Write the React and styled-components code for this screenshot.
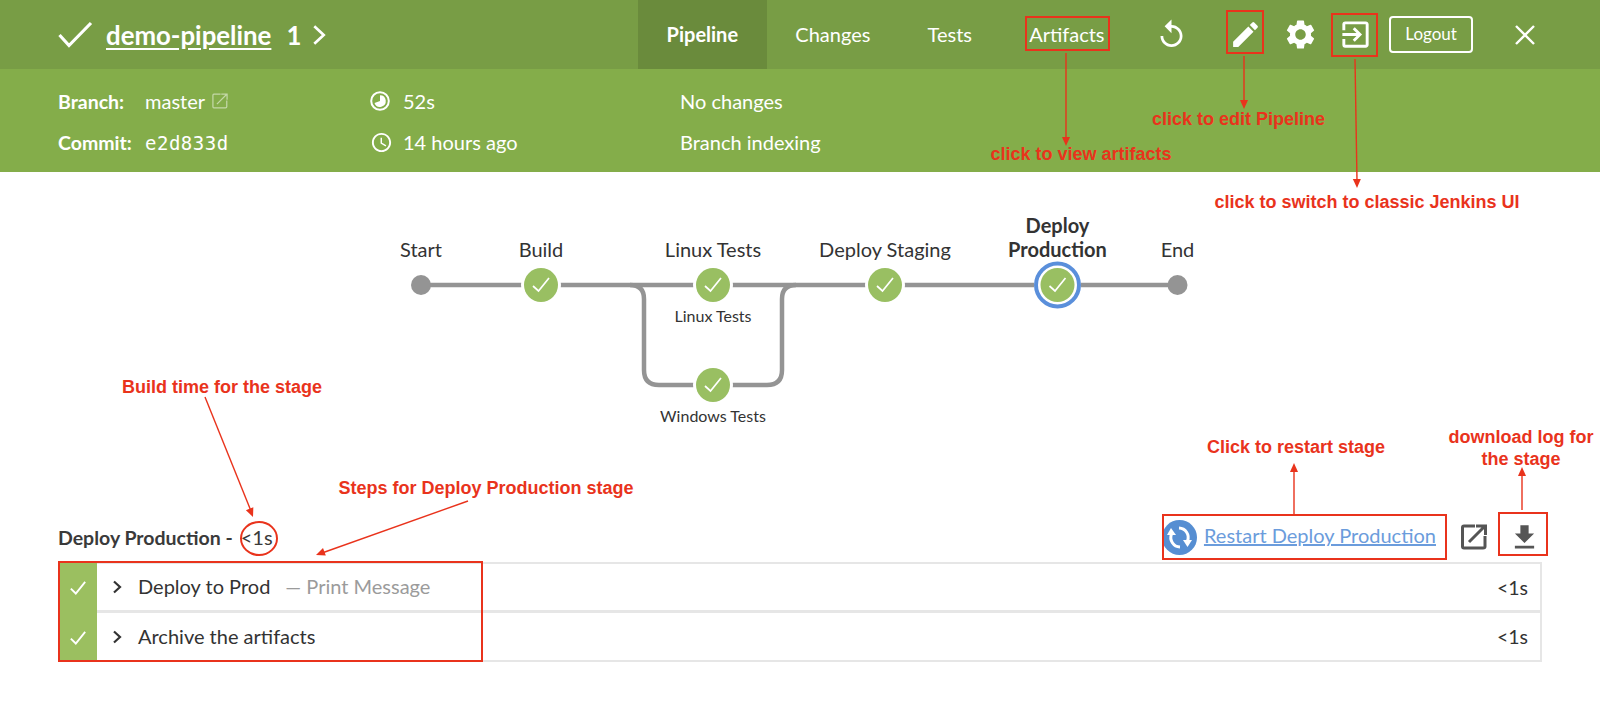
import React from 'react';
import styled, { createGlobalStyle } from 'styled-components';
import { MdEdit, MdSettings, MdExitToApp, MdFileDownload, MdReplay, MdAccessTime } from 'react-icons/md';

const GlobalStyle = createGlobalStyle`
  html, body {
    margin: 0;
    padding: 0;
    background: #fff;
  }
  body {
    font-family: Lato, "Open Sans", sans-serif;
    color: #333;
    overflow: hidden;
  }
`;

const RED = '#e9331c';

const Page = styled.div`
  position: relative;
  width: 1600px;
  height: 705px;
  overflow: hidden;
`;

/* ---------- result header ---------- */

const TopBar = styled.div`
  display: flex;
  align-items: stretch;
  height: 69px;
  padding-left: 58px;
  background: #789d45;
  color: #fff;
`;

const Brand = styled.div`
  display: flex;
  align-items: center;
  width: 580px;
  font-size: 25.8px;
  font-weight: 700;
`;

const PipelineName = styled.a`
  margin-left: 13px;
  color: #fff;
  text-decoration: underline;
  text-underline-offset: 3px;
`;

const RunNumber = styled.span`
  margin-left: 15px;
`;

const RunChevron = styled.span`
  display: flex;
  margin-left: 7px;
`;

const Tabs = styled.nav`
  display: flex;
`;

const Tab = styled.a`
  display: flex;
  align-items: center;
  padding: 0 28.6px 2px;
  font-size: 20px;
  font-weight: ${(p) => (p.$active ? 700 : 400)};
  background: ${(p) => (p.$active ? '#6a8b3c' : 'transparent')};
`;

const Actions = styled.div`
  display: flex;
  align-items: center;
  margin-left: 11px;
`;

const IconButton = styled.span`
  display: flex;
  align-items: center;
  justify-content: center;
  width: ${(p) => p.$width || 55}px;
  margin-right: ${(p) => p.$after || 0}px;
`;

const LogoutButton = styled.span`
  display: flex;
  align-items: center;
  justify-content: center;
  box-sizing: border-box;
  width: 84px;
  height: 37px;
  margin-left: 6px;
  padding-bottom: 2px;
  border: 2px solid #fff;
  border-radius: 4px;
  font-size: 17px;
`;

const CloseButton = styled.span`
  display: flex;
  margin-left: 41px;
`;

const InfoBar = styled.div`
  display: grid;
  grid-template-columns: 312px 310px 1fr;
  grid-template-rows: 41px 41px;
  align-content: center;
  align-items: center;
  height: 103px;
  padding: 2px 0 0 58px;
  box-sizing: border-box;
  background: #84ad4a;
  color: #fff;
  font-size: 20px;
`;

const InfoCell = styled.div`
  display: flex;
  align-items: center;
`;

const InfoLabel = styled.span`
  width: 87px;
  font-weight: 700;
  font-size: 19.5px;
`;

const BranchLink = styled.span`
  display: flex;
  margin-left: 7px;
`;

const CommitHash = styled.span`
  font-family: "DejaVu Sans Mono", monospace;
  font-size: 19px;
  letter-spacing: 0.5px;
  margin-top: 1px;
`;

const InfoIcon = styled.span`
  display: flex;
  width: 33px;
`;

/* ---------- pipeline graph ---------- */

const GraphArea = styled.div`
  position: relative;
  height: 340px;
`;

const GraphLines = styled.svg`
  position: absolute;
  left: 0;
  top: 0;
`;

const NodeLabel = styled.div`
  position: absolute;
  left: ${(p) => p.$x}px;
  top: ${(p) => p.$y}px;
  transform: translate(-50%, -50%);
  text-align: center;
  white-space: nowrap;
  line-height: 24px;
  font-size: ${(p) => (p.$small ? 16 : 20)}px;
  font-weight: ${(p) => (p.$selected ? 700 : 400)};
  color: #333;
`;

/* ---------- stage detail ---------- */

const StageHeader = styled.div`
  display: flex;
  align-items: center;
  justify-content: space-between;
  height: 50px;
  padding: 0 50px 0 58px;
`;

const StageTitle = styled.div`
  font-size: 19.5px;
  font-weight: 700;
  color: #3a3a3a;
`;

const StageTime = styled.span`
  margin-left: 8px;
  font-size: 20px;
  font-weight: 400;
`;

const StageActions = styled.div`
  display: flex;
  align-items: center;
`;

const RestartLink = styled.a`
  display: flex;
  align-items: center;
  gap: 7px;
  margin-right: 25px;
  margin-left: 2px;
  color: #6b9cdc;
  font-size: 20px;
`;

const RestartText = styled.span`
  margin-top: -4px;
  text-decoration: underline;
`;

const DownloadIcon = styled.span`
  display: flex;
  margin-left: 21px;
  margin-right: 9px;
  color: #555;
`;

const StepList = styled.div`
  margin: 0 58px;
  width: 1484px;
`;

const StepRow = styled.div`
  display: flex;
  align-items: center;
  box-sizing: border-box;
  height: ${(p) => (p.$first ? 51 : 49)}px;
  border: solid #e6e6e6;
  border-width: ${(p) => (p.$first ? '2px 2px 3px 0' : '0 2px 2px 0')};
  font-size: 20px;
  color: #333;
`;

const StepStatus = styled.span`
  display: flex;
  align-items: center;
  justify-content: center;
  align-self: stretch;
  width: 39px;
  margin-top: ${(p) => (p.$first ? -2 : 0)}px;
  margin-bottom: ${(p) => (p.$first ? -3 : -2)}px;
  background: #9bbf60;
`;

const StepChevron = styled.span`
  display: flex;
  margin-left: 13px;
  width: 28px;
`;

const StepName = styled.span`
  margin-top: -2px;
`;

const StepNote = styled.span`
  margin-left: 15px;
  margin-top: -2px;
  color: #9b9b9b;
`;

const StepTime = styled.span`
  margin-left: auto;
  margin-right: 12px;
  font-size: 19.5px;
`;

/* ---------- red annotations painted over the screenshot ---------- */

const Overlay = styled.div`
  position: absolute;
  inset: 0;
  pointer-events: none;
`;

const ArrowLayer = styled.svg`
  position: absolute;
  left: 0;
  top: 0;
`;

const Note = styled.div`
  position: absolute;
  left: ${(p) => p.$x}px;
  top: ${(p) => p.$y}px;
  transform: translate(-50%, -50%);
  font-family: "Liberation Sans", Arial, sans-serif;
  font-weight: 700;
  font-size: 18px;
  line-height: 22px;
  text-align: center;
  white-space: nowrap;
  color: ${RED};
`;

const RedBox = styled.div`
  position: absolute;
  box-sizing: border-box;
  left: ${(p) => p.$x}px;
  top: ${(p) => p.$y}px;
  width: ${(p) => p.$w}px;
  height: ${(p) => p.$h}px;
  border: 2px solid ${RED};
  border-radius: ${(p) => (p.$round ? '50%' : '0')};
`;

const Check = ({ size = 20, width = 1.6, color = '#fff' }) => (
  <svg width={size} height={size} viewBox="0 0 20 20" fill="none">
    <path d="M3.5 10.5 L8 15 L16.5 4.5" stroke={color} strokeWidth={width} />
  </svg>
);

const BrandCheck = () => (
  <svg width="35" height="28" viewBox="0 0 35 28" fill="none">
    <path d="M1.5 14 L11 24.5 L33 2" stroke="#fff" strokeWidth="3.2" />
  </svg>
);

const Chevron = ({ size = 14, color = '#333', width = 2.2 }) => (
  <svg width={size} height={size} viewBox="0 0 14 14" fill="none">
    <path d="M4 1.5 L10 7 L4 12.5" stroke={color} strokeWidth={width} />
  </svg>
);

const ExternalIcon = ({ size, color, width }) => (
  <svg width={size} height={size} viewBox="0 0 26 26" fill="none" stroke={color} strokeWidth={width}>
    <path d="M14 2 H3 Q1.5 2 1.5 3.5 V22.5 Q1.5 24 3 24 H22 Q24 24 24 22.5 V12" />
    <path d="M8 18 L24 2 M15 2 H24.5 V11" />
  </svg>
);

const PieClock = () => (
  <svg width="20" height="20" viewBox="0 0 20 20">
    <circle cx="10" cy="10" r="8.8" fill="none" stroke="#fff" strokeWidth="2" />
    <path d="M10 10 V4.2 A5.8 5.8 0 1 1 4.5 12 Z" fill="#fff" />
  </svg>
);

const RestartBadge = () => (
  <svg width="35" height="35" viewBox="0 0 35 35">
    <circle cx="17.5" cy="17.5" r="17.5" fill="#568ed2" />
    <g fill="none" stroke="#fff" strokeWidth="3">
      <path d="M9.5 14 A9.5 9.5 0 0 0 18 27" />
      <path d="M25.5 21 A9.5 9.5 0 0 0 17 8" />
    </g>
    <path d="M5 15 H14 L9 8 Z" fill="#fff" />
    <path d="M21 20 H30 L25.500 27 Z" fill="#fff" />
  </svg>
);

// graph coordinates are page x, y - 172
const nodes = [
  { x: 541, y: 113 },
  { x: 713, y: 113 },
  { x: 713, y: 213 },
  { x: 885, y: 113 },
  { x: 1057.5, y: 113, selected: true },
];

const labels = [
  { x: 421, y: 77, text: 'Start' },
  { x: 541, y: 77, text: 'Build' },
  { x: 713, y: 77, text: 'Linux Tests' },
  { x: 885, y: 77, text: 'Deploy Staging' },
  { x: 1057.5, y: 65, text: ['Deploy', <br key="br" />, 'Production'], selected: true },
  { x: 1177.5, y: 77, text: 'End' },
  { x: 713, y: 144, text: 'Linux Tests', small: true },
  { x: 713, y: 244, text: 'Windows Tests', small: true },
];

const Graph = () => (
  <GraphArea>
    <GraphLines width="1600" height="340" viewBox="0 0 1600 340" fill="none">
      <g stroke="#949494" strokeWidth="4.5" fill="none">
        <path d="M421 113 H1177" />
        <path d="M630 113 Q644 113 644 127 V198 Q644 213 659 213 H767 Q782 213 782 198 V127 Q782 113 796 113" />
      </g>
      <circle cx="421" cy="113" r="10" fill="#949494" />
      <circle cx="1177.5" cy="113" r="10" fill="#949494" />
      {nodes.map((n) => (
        <g key={`${n.x}-${n.y}`}>
          <circle cx={n.x} cy={n.y} r={n.selected ? 23.5 : 20} fill="#fff" />
          {n.selected && <circle cx={n.x} cy={n.y} r="21.5" fill="none" stroke="#5a8fdb" strokeWidth="4" />}
          <circle cx={n.x} cy={n.y} r="17" fill="#99bf62" />
          <path
            d={`M${n.x - 8} ${n.y + 1} L${n.x - 2.5} ${n.y + 6} L${n.x + 8} ${n.y - 7}`}
            stroke="#fff"
            strokeWidth="1.7"
          />
        </g>
      ))}
    </GraphLines>
    {labels.map((l) => (
      <NodeLabel key={`${l.x}-${l.y}`} $x={l.x} $y={l.y} $small={l.small} $selected={l.selected}>
        {l.text}
      </NodeLabel>
    ))}
  </GraphArea>
);

const arrows = [
  { d: 'M1066 53 V140', tip: [1066, 146, 90] },
  { d: 'M1244 56 V103', tip: [1244, 109, 90] },
  { d: 'M1355 59 L1357 181', tip: [1357, 188, 89] },
  { d: 'M205 397 L251 511', tip: [253, 517, 68] },
  { d: 'M468 501 L322 553', tip: [316, 555, 159] },
  { d: 'M1294 514 V470', tip: [1294, 463, -90] },
  { d: 'M1522 510 V473', tip: [1522, 467, -90] },
];

const boxes = [
  { x: 1025, y: 16, w: 85, h: 35 },
  { x: 1226, y: 10, w: 38, h: 44 },
  { x: 1331, y: 13, w: 47, h: 44 },
  { x: 240, y: 521, w: 38, h: 35, round: true },
  { x: 58, y: 561, w: 425, h: 101 },
  { x: 1162, y: 514, w: 285, h: 46 },
  { x: 1498, y: 512, w: 50, h: 44 },
];

const notes = [
  { x: 1238.5, y: 119, text: 'click to edit Pipeline' },
  { x: 1081, y: 154, text: 'click to view artifacts' },
  { x: 1367, y: 202, text: 'click to switch to classic Jenkins UI' },
  { x: 222, y: 387, text: 'Build time for the stage' },
  { x: 486, y: 488, text: 'Steps for Deploy Production stage' },
  { x: 1296, y: 447, text: 'Click to restart stage' },
  { x: 1521, y: 448, text: ['download log for', <br key="br" />, 'the stage'] },
];

const Annotations = () => (
  <Overlay>
    <ArrowLayer width="1600" height="705" viewBox="0 0 1600 705" fill="none">
      {arrows.map((a) => (
        <g key={a.d}>
          <path d={a.d} stroke={RED} strokeWidth="1.4" />
          <path
            d="M0 0 L-9 -4 L-9 4 Z"
            fill={RED}
            transform={`translate(${a.tip[0]} ${a.tip[1]}) rotate(${a.tip[2]})`}
          />
        </g>
      ))}
    </ArrowLayer>
    {boxes.map((b) => (
      <RedBox key={`${b.x}-${b.y}`} $x={b.x} $y={b.y} $w={b.w} $h={b.h} $round={b.round} />
    ))}
    {notes.map((n) => (
      <Note key={`${n.x}-${n.y}`} $x={n.x} $y={n.y}>
        {n.text}
      </Note>
    ))}
  </Overlay>
);

const steps = [
  { name: 'Deploy to Prod', note: '— Print Message' },
  { name: 'Archive the artifacts' },
];

export default function App() {
  return (
    <Page>
      <GlobalStyle />
      <TopBar>
        <Brand>
          <BrandCheck />
          <PipelineName>demo-pipeline</PipelineName>
          <RunNumber>1</RunNumber>
          <RunChevron><Chevron size={22} color="#fff" width={1.7} /></RunChevron>
        </Brand>
        <Tabs>
          <Tab $active>Pipeline</Tab>
          <Tab>Changes</Tab>
          <Tab>Tests</Tab>
          <Tab>Artifacts</Tab>
        </Tabs>
        <Actions>
          <IconButton $width={55} $after={19}>
            <MdReplay size={33} />
          </IconButton>
          <IconButton><MdEdit size={33} /></IconButton>
          <IconButton><MdSettings size={35} /></IconButton>
          <IconButton><MdExitToApp size={35} /></IconButton>
          <LogoutButton>Logout</LogoutButton>
          <CloseButton>
            <svg width="22" height="22" viewBox="0 0 22 22" stroke="#fff" strokeWidth="2.4">
              <path d="M2 2 L20 20 M20 2 L2 20" />
            </svg>
          </CloseButton>
        </Actions>
      </TopBar>
      <InfoBar>
        <InfoCell>
          <InfoLabel>Branch:</InfoLabel>
          master
          <BranchLink><ExternalIcon size={16} color="#c4d8a8" width={2} /></BranchLink>
        </InfoCell>
        <InfoCell>
          <InfoIcon><PieClock /></InfoIcon>
          52s
        </InfoCell>
        <InfoCell>No changes</InfoCell>
        <InfoCell>
          <InfoLabel>Commit:</InfoLabel>
          <CommitHash>e2d833d</CommitHash>
        </InfoCell>
        <InfoCell>
          <InfoIcon><MdAccessTime size={23} /></InfoIcon>
          14 hours ago
        </InfoCell>
        <InfoCell>Branch indexing</InfoCell>
      </InfoBar>
      <Graph />
      <StageHeader>
        <StageTitle>Deploy Production -<StageTime>&lt;1s</StageTime></StageTitle>
        <StageActions>
          <RestartLink>
            <RestartBadge />
            <RestartText>Restart Deploy Production</RestartText>
          </RestartLink>
          <ExternalIcon size={26} color="#555" width={3} />
          <DownloadIcon><MdFileDownload size={33} /></DownloadIcon>
        </StageActions>
      </StageHeader>
      <StepList>
        {steps.map((s, i) => (
          <StepRow key={s.name} $first={i === 0}>
            <StepStatus $first={i === 0}><Check size={22} width={1.7} /></StepStatus>
            <StepChevron><Chevron /></StepChevron>
            <StepName>{s.name}</StepName>
            {s.note && <StepNote>{s.note}</StepNote>}
            <StepTime>&lt;1s</StepTime>
          </StepRow>
        ))}
      </StepList>
      <Annotations />
    </Page>
  );
}
